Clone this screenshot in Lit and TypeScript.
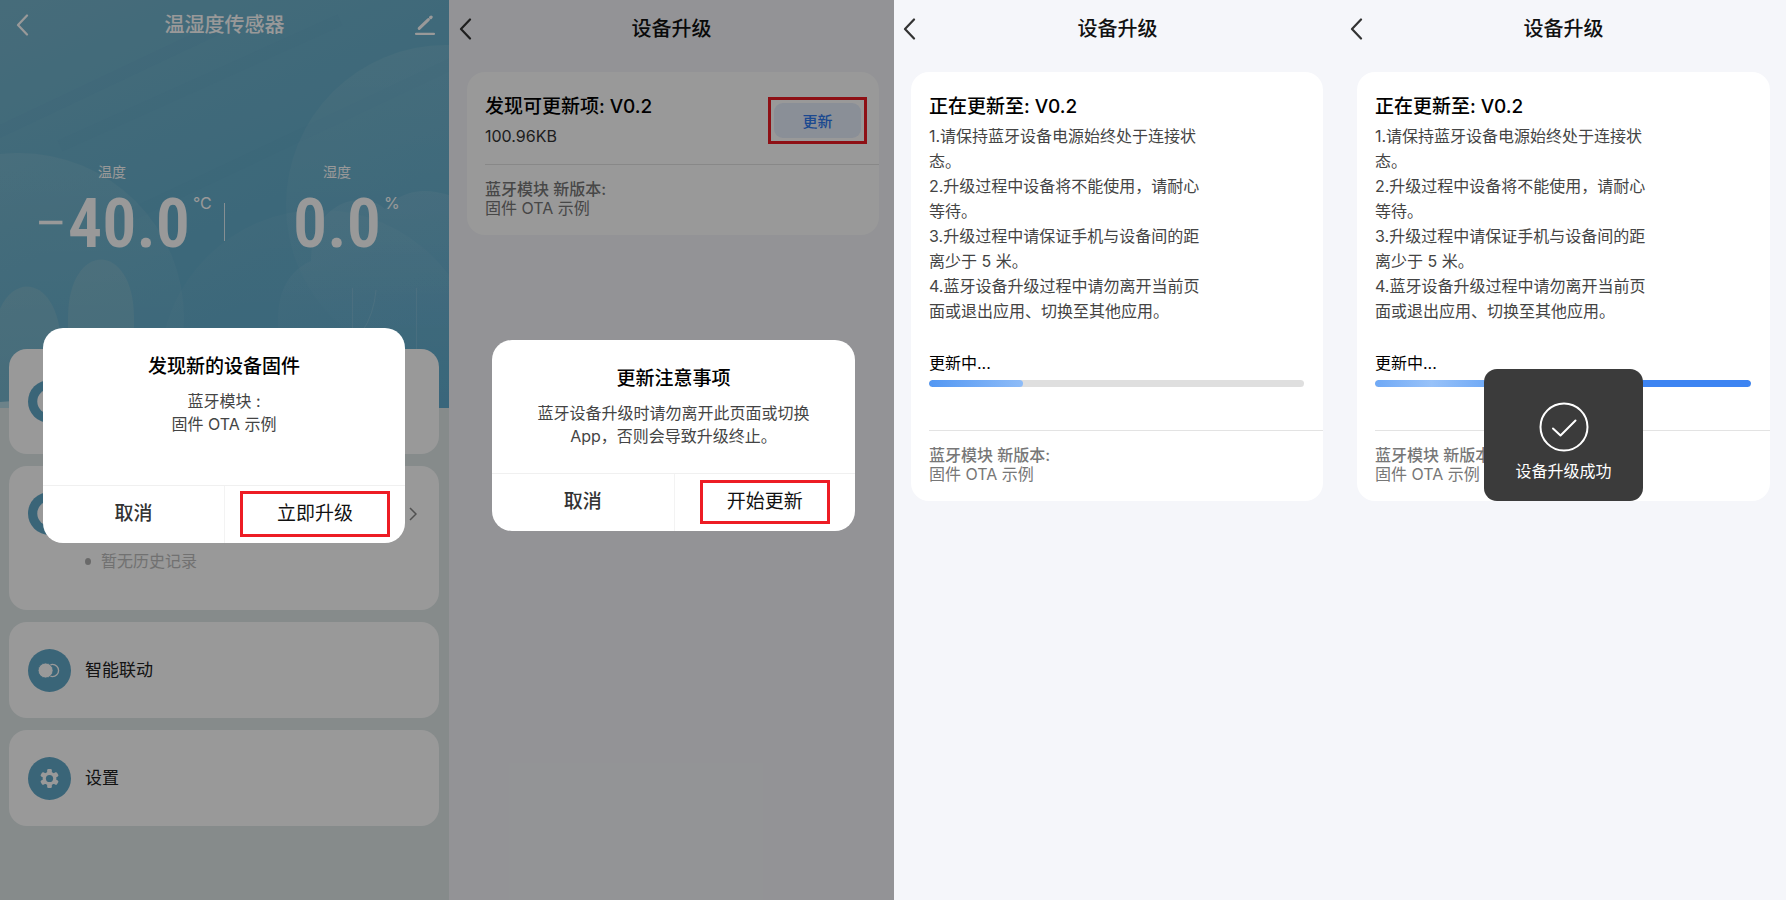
import { LitElement, html, css, svg, nothing } from "lit";
import { customElement, property } from "lit/decorators.js";

const backIcon = svg`<path d="M11 1.500 2 11l9 9.500" fill="none" stroke="currentColor" stroke-width="2.200" stroke-linecap="round" stroke-linejoin="round"/>`;

const base = css`
  *, *::before, *::after { box-sizing: border-box; }
  h1, h2, p, ol, ul { margin: 0; padding: 0; font-weight: 400; }
  button { border: 0; padding: 0; background: none; font: inherit; color: inherit; cursor: pointer; }
  svg { display: block; }
`;

@customElement("nav-bar")
class NavBar extends LitElement {
  @property() heading = "";
  @property({ type: Boolean }) editable = false;

  static styles = [base, css`
    :host { display: block; color: #111; }
    .bar { display: grid; grid-template-columns: 48px 1fr 48px; align-items: center; height: var(--nav-height, 58px); }
    .back { padding-left: var(--nav-inset, 10px); height: 44px; display: flex; align-items: center; color: var(--nav-icon, #333); }
    .edit { height: 44px; display: flex; align-items: center; justify-content: flex-end; padding-right: 14px; color: var(--nav-icon, #333); }
    h1 { font-size: 20px; line-height: 28px; font-weight: 500; text-align: center; }
  `];

  render() {
    return html`<header class="bar">
      <button class="back" aria-label="返回"><svg width="13" height="22" viewBox="0 0 13 22">${backIcon}</svg></button>
      <h1>${this.heading}</h1>
      ${this.editable ? html`<button class="edit" aria-label="编辑">
        <svg width="20" height="20" viewBox="0 0 20 20" stroke="currentColor" fill="none" stroke-linecap="round">
          <path d="M1 18.800h18" stroke-width="2.200"/>
          <path d="M4.200 13.400 13.400 4.600" stroke-width="3"/>
          <path d="M15.700 2.500l.4-.4" stroke-width="3.200"/>
        </svg></button>` : nothing}
    </header>`;
  }
}

@customElement("confirm-dialog")
class ConfirmDialog extends LitElement {
  @property() heading = "";
  @property({ attribute: false }) lines: string[] = [];
  @property() confirm = "";

  static styles = [base, css`
    :host { display: block; width: 100%; }
    .dialog { background: #fff; border-radius: 20px; overflow: hidden; text-align: center; }
    .body { padding: 25px 24px var(--dialog-space, 25px); }
    h2 { font-size: 19px; line-height: 28px; font-weight: 500; color: #000; }
    p { font-size: 16px; line-height: 23px; color: #444; margin-top: 9px; }
    .actions { display: grid; grid-template-columns: 1fr 1fr; height: 58px; border-top: 1px solid #f0f0f0; }
    .actions button { font-size: 19px; line-height: 28px; display: flex; align-items: center; justify-content: center; }
    .cancel { color: #333; font-weight: 500; }
    .actions .ok { color: #111; border-left: 1px solid #f3f3f3; }
    .mark { display: flex; align-items: center; justify-content: center; width: var(--mark-width, 150px); height: var(--mark-height, 46px); border: 3px solid #ed1c24; }
  `];

  render() {
    return html`<section class="dialog" role="dialog" aria-label=${this.heading}>
      <div class="body">
        <h2>${this.heading}</h2>
        <p>${this.lines.map((line, i) => html`${i ? html`<br>` : nothing}${line}`)}</p>
      </div>
      <div class="actions">
        <button class="cancel">取消</button>
        <button class="ok"><span class="mark">${this.confirm}</span></button>
      </div>
    </section>`;
  }
}

const toggleIcon = svg`<circle cx="25" cy="22" r="6.300" fill="none" stroke="#fff" stroke-width="1.400"/><circle cx="18" cy="22" r="7.600" fill="#fff" stroke="#61a8c8" stroke-width=".8"/>`;
const roundIcon = svg`<circle cx="22" cy="22" r="12.500" fill="#fff"/>`;
const gearIcon = svg`<g fill="#fff"><circle cx="22" cy="22" r="7"/>${[0, 60, 120, 180, 240, 300].map(
  (a) => svg`<rect x="19.600" y="12.400" width="4.800" height="6" rx="1.200" transform="rotate(${a} 22 22)"/>`,
)}</g><circle cx="22" cy="22" r="3.700" fill="#61a8c8"/>`;

@customElement("sensor-screen")
class SensorScreen extends LitElement {
  static styles = [base, css`
    :host { display: grid; grid-template: 1fr / 1fr; background: #dfe8e8; }
    :host > * { grid-area: 1 / 1; }
    .art { width: 100%; height: 408px; }
    .page { --nav-height: 50px; --nav-inset: 16px; --nav-icon: #fff; }
    nav-bar { color: #fff; }
    .readings { display: grid; grid-template-columns: 1fr 1px 1fr; align-items: end; height: 216px; color: #fff; }
    .rule { width: 1px; height: 38px; margin-bottom: 25px; background: #fff; opacity: .8; }
    .reading { display: grid; justify-items: center; }
    .name { font-size: 14px; line-height: 20px; }
    .value { display: flex; align-items: flex-start; font-family: "Liberation Sans Narrow", "Roboto Condensed", Roboto, sans-serif; font-weight: 600; font-size: 68px; line-height: 84px; }
    .minus { font-weight: 300; }
    .value sup { width: 0; white-space: nowrap; text-indent: 3px; font: 400 16px/20px Inter, sans-serif; margin-top: 11px; }
    .cards { display: grid; gap: 12px; padding: 83px 10px 0 9px; }
    .card { background: #fff; border-radius: 18px; padding: 0 19px; display: grid; grid-template-columns: 43px 1fr auto; align-items: center; column-gap: 14px; height: 96px; font-size: 17px; line-height: 26px; color: #222; }
    .card.first { height: 105px; }
    .card.history { height: 144px; align-content: start; row-gap: 13px; padding: 26px 22px 0 19px; }
    .icon { width: 43px; height: 43px; }
    .empty { grid-column: 2 / 4; display: flex; align-items: center; gap: 10px; font-size: 16px; color: #bdbdbd; line-height: 26px; }
    .empty::before { content: ""; width: 6px; height: 7px; border-radius: 50%; background: #b0b0b0; }
    .scrim { background: rgb(0 0 0 / .4); display: flex; align-items: center; padding: 0 44px 30px 43px; --dialog-space: 49px; position: relative; }
  `];

  icon(shape: unknown) {
    return html`<svg class="icon" viewBox="0 0 44 44"><circle cx="22" cy="22" r="22" fill="#61a8c8"/>${shape}</svg>`;
  }

  render() {
    return html`
      <svg class="art" viewBox="0 0 449 408" preserveAspectRatio="none" aria-hidden="true">
        <defs>
          <linearGradient id="sky" x1="0" y1="0" x2=".5" y2="1">
            <stop offset="0" stop-color="#76b4cc"/><stop offset=".45" stop-color="#69b0cb"/><stop offset="1" stop-color="#5daacc"/>
          </linearGradient>
          <linearGradient id="cloud" x1="0" y1="0" x2="0" y2="1">
            <stop offset="0" stop-color="#fff" stop-opacity=".08"/><stop offset="1" stop-color="#fff" stop-opacity="0"/>
          </linearGradient>
        </defs>
        <rect width="449" height="408" fill="url(#sky)"/>
        <g stroke="#4c90c0" stroke-opacity=".05" stroke-width="12">
          <path d="M-10 136 240 18"/><path d="M60 146 340 20"/><path d="M120 220 460 60"/>
        </g>
        <circle cx="446" cy="205" r="160" fill="url(#cloud)"/>
        <circle cx="19" cy="318" r="165" fill="url(#cloud)"/>
        <circle cx="320" cy="370" r="160" fill="url(#cloud)" opacity=".5"/>
        <path d="M278 408V320c0-30 12-50 33-59 0-60 52-72 74-52 20-22 44-20 64-14v213z" fill="url(#cloud)"/>
        <path d="M68 408v-90c0-78 66-78 66 0v90z" fill="#fff2d8" fill-opacity=".11"/>
        <path d="M-7 408v-60c0-82 68-82 68 0v60z" fill="#fff2d8" fill-opacity=".11"/>
        <path d="M0 402q20-1 40-6v12H0z" fill="#b5d9e4"/>
        <g stroke="#fff" stroke-opacity=".12" fill="none"><path d="M352.500 288v80M416.500 288v80M376 290q-2 24-14 42"/></g>
      </svg>
      <div class="page">
        <nav-bar heading="温湿度传感器" editable></nav-bar>
        <div class="readings">
          <div class="reading"><span class="name">温度</span><span class="value"><span class="minus">−</span>40.0<sup>°C</sup></span></div>
          <span class="rule"></span>
          <div class="reading"><span class="name">湿度</span><span class="value">0.0<sup>%</sup></span></div>
        </div>
        <div class="cards">
          <section class="card first">${this.icon(roundIcon)}</section>
          <section class="card history">
            ${this.icon(roundIcon)}<span></span>
            <svg width="8" height="14" viewBox="0 0 8 14"><path d="M1 1l6 6-6 6" fill="none" stroke="#888" stroke-width="1.500"/></svg>
            <p class="empty">暂无历史记录</p>
          </section>
          <section class="card">${this.icon(toggleIcon)}<span>智能联动</span></section>
          <section class="card">${this.icon(gearIcon)}<span>设置</span></section>
        </div>
      </div>
      <div class="scrim">
        <confirm-dialog heading="发现新的设备固件" .lines=${["蓝牙模块 :", "固件 OTA 示例"]} confirm="立即升级"></confirm-dialog>
      </div>`;
  }
}

const STEPS = [
  "1.请保持蓝牙设备电源始终处于连接状态。",
  "2.升级过程中设备将不能使用，请耐心等待。",
  "3.升级过程中请保证手机与设备间的距离少于 5 米。",
  "4.蓝牙设备升级过程中请勿离开当前页面或退出应用、切换至其他应用。",
];

@customElement("upgrade-screen")
class UpgradeScreen extends LitElement {
  @property() stage: "found" | "updating" | "done" = "found";
  @property({ type: Number }) progress = 0;

  static styles = [base, css`
    :host { display: grid; grid-template: 1fr / 1fr; background: #f5f6fa; }
    :host > * { grid-area: 1 / 1; }
    .found { --card-margin: 14px 15px 0 18px; --nav-inset: 10px; }
    .updating { --card-margin: 14px 18px 0 17px; --nav-inset: 9px; }
    .done { --card-margin: 14px 16px 0 16px; --nav-inset: 9px; }
    .card { margin: var(--card-margin); background: #fff; border-radius: 18px; padding: 21px 0 17px 18px; }
    .head { display: flex; justify-content: space-between; align-items: center; padding-right: 12px; }
    h2 { font-size: 19px; line-height: 28px; font-weight: 500; color: #000; }
    .size { font-size: 16px; line-height: 24px; margin-top: 3px; color: #333; }
    .mark { border: 3px solid #ed1c24; padding: 3px; }
    .update { display: block; width: 87px; height: 35px; border-radius: 9px; background: #e6eefc; color: #2f7af0; font-size: 15px; font-weight: 500; }
    .steps { list-style: none; max-width: 280px; margin-top: 3px; font-size: 16px; line-height: 25px; color: #444; }
    .status { font-size: 16px; line-height: 24px; color: #000; margin-top: 27px; }
    .track { height: 7px; border-radius: 4px; background: #dfdfdf; margin: 5px 19px 43px 0; overflow: hidden; }
    .fill { height: 100%; border-radius: 4px; background: linear-gradient(90deg, #5297f3, #8ebcf8); }
    .done .fill { background: linear-gradient(90deg, #6fa9f6, #98c2f9 15%, #6fa9f6 30%, #3d84f2 65%, #3d84f2); }
    .foot { border-top: 1px solid #e3e3e3; padding-top: 15px; font-size: 16px; line-height: 19px; color: #777; }
    .found .foot { margin-top: 16px; }
    .foot b { display: block; font-weight: 500; }
    .scrim { background: rgb(0 0 0 / .4); display: flex; align-items: center; padding: 0 39px 30px 43px; --mark-width: 130px; --mark-height: 44px; position: relative; }
    .overlay { display: flex; align-items: center; justify-content: center; padding-bottom: 30px; position: relative; }
    .toast { background: #3b3b3b; color: #fff; border-radius: 13px; width: 159px; padding: 33px 16px 18px; font-size: 16px; line-height: 24px; display: grid; justify-items: center; gap: 7px; white-space: nowrap; }
  `];

  card() {
    const foot = html`<footer class="foot"><b>蓝牙模块 新版本:</b>固件 OTA 示例</footer>`;
    if (this.stage === "found") {
      return html`<section class="card">
        <div class="head">
          <div><h2>发现可更新项: V0.2</h2><p class="size">100.96KB</p></div>
          <span class="mark"><button class="update">更新</button></span>
        </div>${foot}</section>`;
    }
    return html`<section class="card">
      <h2>正在更新至: V0.2</h2>
      <ol class="steps">${STEPS.map((s) => html`<li>${s}</li>`)}</ol>
      <p class="status" id="status">更新中...</p>
      <div class="track" role="progressbar" aria-labelledby="status" aria-valuenow=${this.progress}>
        <div class="fill" style="width:${this.progress}%"></div>
      </div>${foot}</section>`;
  }

  render() {
    return html`
      <div class=${this.stage}>
        <nav-bar heading="设备升级"></nav-bar>
        ${this.card()}
      </div>
      ${this.stage === "found" ? html`<div class="scrim">
        <confirm-dialog heading="更新注意事项" .lines=${["蓝牙设备升级时请勿离开此页面或切换", "App，否则会导致升级终止。"]} confirm="开始更新"></confirm-dialog>
      </div>` : nothing}
      ${this.stage === "done" ? html`<div class="overlay"><div class="toast" role="status">
        <svg width="50" height="50" viewBox="0 0 50 50" fill="none" stroke="#fff" stroke-width="2" stroke-linecap="round" stroke-linejoin="round">
          <circle cx="25" cy="25" r="23.500"/><path d="M14 26.500l7.500 7 15-15"/>
        </svg>
        设备升级成功</div></div>` : nothing}`;
  }
}

@customElement("app-root")
class AppRoot extends LitElement {
  static styles = css`
    :host { display: block; font-family: Inter, "Noto Sans CJK SC", sans-serif; }
    .screens { display: grid; grid-template-columns: 449fr 445fr 447fr 445fr; min-height: 100vh; }
  `;

  render() {
    return html`<main class="screens">
      <sensor-screen></sensor-screen>
      <upgrade-screen stage="found"></upgrade-screen>
      <upgrade-screen stage="updating" progress="25"></upgrade-screen>
      <upgrade-screen stage="done" progress="100"></upgrade-screen>
    </main>`;
  }
}
